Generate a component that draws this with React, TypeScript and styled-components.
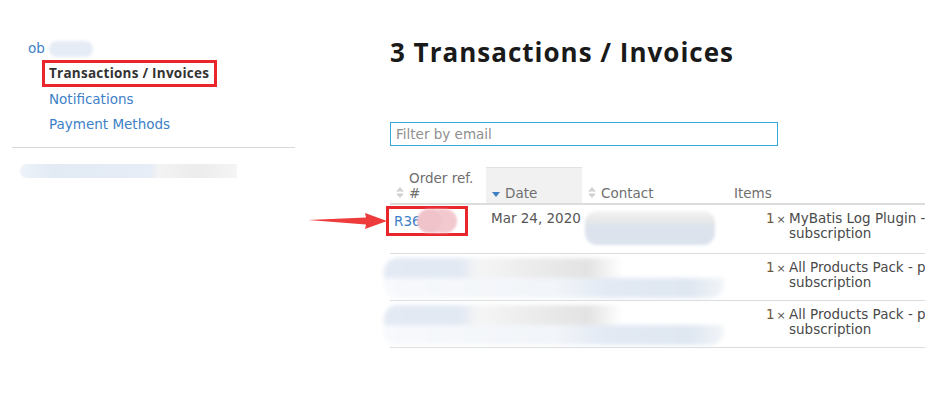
import React from "react";
import styled, { createGlobalStyle } from "styled-components";

const Global = createGlobalStyle`
  html, body { margin: 0; padding: 0; background: #fff; overflow: hidden; }
  body { font-family: "DejaVu Sans", "Open Sans", sans-serif; color: #555; }
  * { box-sizing: border-box; }
`;

const Page = styled.div`
  display: flex;
  width: 925px;
  height: 400px;
  overflow: hidden;
`;

const Sidebar = styled.aside`
  flex: 0 0 283px;
  margin-left: 12px;
  padding-top: 39px;
`;

const AccountLink = styled.a`
  display: block;
  margin-left: 16px;
  font-size: 13.5px;
  line-height: 18px;
  color: #3d7fc7;
  text-decoration: none;
`;

const Blur = styled.span<{ $w: number; $h: number; $c: string }>`
  display: inline-block;
  vertical-align: middle;
  width: ${(p) => p.$w}px;
  height: ${(p) => p.$h}px;
  background: ${(p) => p.$c};
  border-radius: 8px;
  filter: blur(1.5px);
`;

const SubNav = styled.ul`
  list-style: none;
  margin: 4px 0 0 37px;
  padding: 0;
  display: flex;
  flex-direction: column;
`;

const SubItem = styled.li`
  height: 25px;
  display: flex;
  align-items: center;
`;

const SubLink = styled.a<{ $active?: boolean }>`
  font-size: 13.5px;
  text-decoration: none;
  color: ${(p) => (p.$active ? "#333" : "#3d7fc7")};
  ${(p) =>
    p.$active
      ? `font-family: "Open Sans", sans-serif; font-weight: 700; letter-spacing: 0.25px;
         border: 3px solid #e8262b; padding: 1px 5px 1px 4px; margin-left: -7px; line-height: 19px;`
      : ``}
`;

const Divider = styled.hr`
  border: none;
  border-top: 1px solid #d8d8d8;
  margin: 11px 0 0 0;
`;

const SideBlur = styled.div`
  margin: 16px 0 0 8px;
  width: 217px;
  height: 14px;
  border-radius: 7px 0 0 7px;
  background: linear-gradient(90deg, #eef3f9 0%, #e2eaf4 15%, #e6edf6 60%, #f3f3f3 64%, #ececec 82%, #f5f5f5 100%);
  filter: blur(0.6px);
`;

const Main = styled.main`
  margin-left: 95px;
  flex: 1 1 auto;
  min-width: 0;
`;

const Title = styled.h1`
  margin: 35px 0 0 0;
  font-family: "Open Sans", sans-serif;
  font-size: 26px;
  line-height: 34px;
  font-weight: 700;
  color: #1a1a1a;
  letter-spacing: 1px;
`;

const Filter = styled.input`
  display: block;
  margin-top: 53px;
  width: 388px;
  height: 24px;
  border: 1px solid #37a6e2;
  padding: 0 5px;
  font-family: inherit;
  font-size: 13.5px;
  color: #555;
  outline: none;
  &::placeholder { color: #8f8f8f; }
`;

const Table = styled.table`
  margin-top: 21px;
  width: 720px;
  border-collapse: collapse;
  table-layout: fixed;
  font-size: 13.5px;
`;

const Th = styled.th<{ $sorted?: boolean }>`
  text-align: left;
  vertical-align: bottom;
  font-weight: 400;
  color: #6f6f6f;
  line-height: 15px;
  padding: 3px 6px 2px 6px;
  border-bottom: 2px solid #dcdcdc;
  background: ${(p) => (p.$sorted ? "#f1f1f1" : "transparent")};
  border-top: ${(p) => (p.$sorted ? "1px solid #e2e2e2" : "1px solid transparent")};
`;

const HeadInner = styled.div`
  display: flex;
  align-items: flex-end;
  gap: 5px;
`;

const SortIcon = styled.svg`
  flex: 0 0 auto;
  margin-bottom: 3px;
`;

const Td = styled.td<{ $pl?: number; $pr?: number }>`
  vertical-align: top;
  padding: 6px ${(p) => p.$pr ?? 6}px 10px ${(p) => p.$pl ?? 6}px;
  line-height: 15px;
  color: #555;
  border-bottom: 1px solid #dcdcdc;
  white-space: nowrap;
`;

const RefBox = styled.span`
  position: relative;
  display: inline-flex;
  align-items: center;
  margin: -5px 0 -6px -10px;
  border: 3px solid #e8262b;
  padding: 0 5px;
  height: 30px;
  width: 82px;
`;

const RefLink = styled.a`
  color: #3d7fc7;
  text-decoration: none;
`;

const Arrow = styled.svg`
  position: absolute;
  right: 100%;
  top: 1px;
  margin-right: 1px;
`;

const Blob = styled.span`
  display: inline-block;
  width: 40px;
  height: 24px;
  margin-left: -4px;
  border-radius: 12px;
  background: radial-gradient(circle at 30% 50%, #f0c3ca 0 40%, transparent 42%),
    radial-gradient(circle at 70% 50%, #f2c9cf 0 40%, transparent 42%), #f4d3d8;
  filter: blur(1.2px);
`;

const ContactBlur = styled.div`
  margin: 0 0 -2px 0;
  width: 130px;
  height: 34px;
  border-radius: 12px;
  background: linear-gradient(180deg, #f4f4f4 0%, #e8e8e8 25%, #dde3ec 45%, #dce3ed 100%);
  filter: blur(1.5px);
`;

const WideBlur = styled.div`
  width: 340px;
  margin: -2px 0 -8px -12px;
  height: 40px;
  border-radius: 14px;
  background:
    linear-gradient(90deg, #e3eaf4 0%, #e2e9f3 22%, #f5f5f5 28%, #e8e8e8 50%, #e3e3e3 60%, transparent 70%) top / 100% 50% no-repeat,
    linear-gradient(90deg, #f7f9fc 0%, #f2f5f9 50%, #e3eaf4 65%, #dfe7f1 90%, #f2f5f9 100%) bottom / 100% 50% no-repeat;
  filter: blur(2px);
`;

const ItemLine = styled.div`
  display: flex;
  height: 15px;
  color: #4a4a4a;
`;

const Qty = styled.span`
  width: 23px;
  flex: 0 0 23px;
  display: flex;
  align-items: baseline;
  gap: 2px;
  color: #6b5a3a;
`;

const Times = styled.span`
  font-size: 11px;
  color: #555;
`;

const SortBoth = () => (
  <SortIcon width="8" height="11" viewBox="0 0 8 11">
    <path d="M4 0 L8 4.5 H0 Z" fill="#d2d2d2" />
    <path d="M4 11 L8 6.5 H0 Z" fill="#d2d2d2" />
  </SortIcon>
);

const SortDown = () => (
  <SortIcon width="8" height="5" viewBox="0 0 8 5" style={{ marginBottom: 4 }}>
    <path d="M0 0 H8 L4 5 Z" fill="#3d7fc7" />
  </SortIcon>
);

const Item = ({ name }: { name: string }) => (
  <>
    <ItemLine>
      <Qty>
        1<Times>×</Times>
      </Qty>
      <span>{name}</span>
    </ItemLine>
    <ItemLine>
      <Qty />
      <span>subscription</span>
    </ItemLine>
  </>
);

export default function App() {
  return (
    <>
      <Global />
      <Page>
        <Sidebar>
          <AccountLink href="#">
            ob <Blur $w={44} $h={16} $c="#e6ecf5" />
          </AccountLink>
          <SubNav>
            <SubItem>
              <SubLink $active href="#">Transactions / Invoices</SubLink>
            </SubItem>
            <SubItem>
              <SubLink href="#">Notifications</SubLink>
            </SubItem>
            <SubItem>
              <SubLink href="#">Payment Methods</SubLink>
            </SubItem>
          </SubNav>
          <Divider />
          <SideBlur />
        </Sidebar>
        <Main>
          <Title>3 Transactions / Invoices</Title>
          <Filter placeholder="Filter by email" />
          <Table>
            <colgroup>
              <col style={{ width: 96 }} />
              <col style={{ width: 96 }} />
              <col style={{ width: 146 }} />
              <col />
            </colgroup>
            <thead>
              <tr>
                <Th>
                  <HeadInner>
                    <SortBoth />
                    <span>Order ref.<br />#</span>
                  </HeadInner>
                </Th>
                <Th $sorted>
                  <HeadInner>
                    <SortDown />
                    <span>Date</span>
                  </HeadInner>
                </Th>
                <Th>
                  <HeadInner>
                    <SortBoth />
                    <span>Contact</span>
                  </HeadInner>
                </Th>
                <Th>Items</Th>
              </tr>
            </thead>
            <tbody>
              <tr>
                <Td>
                  <RefBox>
                    <Arrow width="80" height="22" viewBox="0 0 80 22">
                      <path d="M0 10 L58 7.5 L57 3 L79 11 L57 19 L58 14.5 Z" fill="#ee3b3b" />
                    </Arrow>
                    <RefLink href="#">R36</RefLink>
                    <Blob />
                  </RefBox>
                </Td>
                <Td $pl={5} $pr={0}>Mar 24, 2020</Td>
                <Td $pl={3}>
                  <ContactBlur />
                </Td>
                <Td $pl={38}>
                  <Item name="MyBatis Log Plugin - personal" />
                </Td>
              </tr>
              <tr>
                <Td colSpan={3}>
                  <WideBlur />
                </Td>
                <Td $pl={38}>
                  <Item name="All Products Pack - personal" />
                </Td>
              </tr>
              <tr>
                <Td colSpan={3}>
                  <WideBlur />
                </Td>
                <Td $pl={38}>
                  <Item name="All Products Pack - personal" />
                </Td>
              </tr>
            </tbody>
          </Table>
        </Main>
      </Page>
    </>
  );
}
